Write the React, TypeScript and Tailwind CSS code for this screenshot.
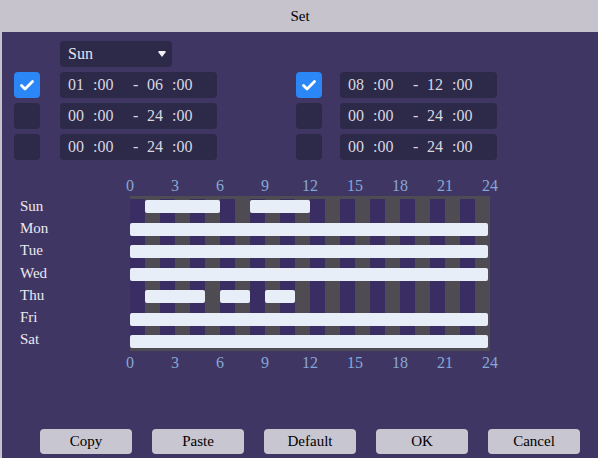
import React from 'react';

type Period = { on: boolean; from: string; to: string };

const leftPeriods: Period[] = [
  { on: true, from: '01', to: '06' },
  { on: false, from: '00', to: '24' },
  { on: false, from: '00', to: '24' },
];

const rightPeriods: Period[] = [
  { on: true, from: '08', to: '12' },
  { on: false, from: '00', to: '24' },
  { on: false, from: '00', to: '24' },
];

// hour ranges per day [start, end]
const schedule: { day: string; spans: [number, number][] }[] = [
  { day: 'Sun', spans: [[1, 6], [8, 12]] },
  { day: 'Mon', spans: [[0, 24]] },
  { day: 'Tue', spans: [[0, 24]] },
  { day: 'Wed', spans: [[0, 24]] },
  { day: 'Thu', spans: [[1, 5], [6, 8], [9, 11]] },
  { day: 'Fri', spans: [[0, 24]] },
  { day: 'Sat', spans: [[0, 24]] },
];

const ticks = [0, 3, 6, 9, 12, 15, 18, 21, 24];
const HOUR = 15;

const Checkbox: React.FC<{ on: boolean }> = ({ on }) => (
  <div
    className={`w-[26px] h-[26px] rounded-[4px] flex items-center justify-center ${
      on ? 'bg-[#2b87f6]' : 'bg-[#2d2948]'
    }`}
  >
    {on && (
      <svg width="18" height="18" viewBox="0 0 18 18">
        <polyline points="3.5,9.5 7,13 14.5,5.5" fill="none" stroke="white" strokeWidth="2.8" strokeLinecap="round" strokeLinejoin="round" />
      </svg>
    )}
  </div>
);

const TimeField: React.FC<{ from: string; to: string }> = ({ from, to }) => (
  <div className="w-[157px] h-[26px] rounded-[4px] bg-[#2d2948] flex items-center pl-[8px] text-[16px] text-[#d8d8e2]">
    <span className="w-[25px]">{from}</span>
    <span className="w-[40px]">:00</span>
    <span className="w-[14px]">-</span>
    <span className="w-[25px]">{to}</span>
    <span>:00</span>
  </div>
);

const Axis = () => (
  <div className="grid grid-cols-[repeat(9,45px)] ml-[93.5px] h-[20px] items-center text-[16px] leading-none text-[#84a8d8]">
    {ticks.map((t) => (
      <span key={t} className="text-center">{t}</span>
    ))}
  </div>
);

export default function App() {
  return (
    <div className="w-[598px] h-[458px] flex flex-col bg-[#403663] border-l-2 border-[#c6c3cc] overflow-hidden font-['Liberation_Serif','Times_New_Roman',serif]">
      <div className="h-[32px] shrink-0 bg-[#c6c3cc] flex items-center justify-center text-[15px] text-black">
        Set
      </div>

      <div className="flex-1 flex flex-col pl-[12px] pt-[9px] pb-[4px]">
        <div className="ml-[46px] w-[112px] h-[26px] rounded-[4px] bg-[#2d2948] flex items-center justify-between pl-[8px] pr-[6px] text-[16px] text-[#e4e4ec]">
          <span>Sun</span>
          <svg width="8" height="7" viewBox="0 0 8 7">
            <path d="M0.5 0 H7.5 V1.5 L4 6 L0.5 1.5 Z" fill="#f0f0f4" />
          </svg>
        </div>

        <div className="mt-[5px] flex flex-col gap-[5px]">
          {leftPeriods.map((p, i) => (
            <div key={i} className="flex items-center">
              <Checkbox on={p.on} />
              <div className="ml-[20px]">
                <TimeField from={p.from} to={p.to} />
              </div>
              <div className="ml-[79px]">
                <Checkbox on={rightPeriods[i].on} />
              </div>
              <div className="ml-[18px]">
                <TimeField from={rightPeriods[i].from} to={rightPeriods[i].to} />
              </div>
            </div>
          ))}
        </div>

        <div className="mt-[16px]">
          <Axis />
        </div>

        <div className="flex">
          <div className="ml-[6px] w-[110px] pt-[4px] flex flex-col gap-[9.2px] text-[15px] text-[#eceaf2]">
            {schedule.map((r) => (
              <div key={r.day} className="h-[13px] leading-[13px]">{r.day}</div>
            ))}
          </div>
          <div className="w-[360px] bg-[#4e4c52] py-[3px]">
            <div className="pt-[1px] flex flex-col gap-[9.5px] bg-[repeating-linear-gradient(90deg,#392d64_0px,#392d64_15px,#4e4c52_15px,#4e4c52_30px)]">
              {schedule.map((r) => (
                <div key={r.day} className="relative h-[13px]">
                  {r.spans.map(([a, b], j) => (
                    <div
                      key={j}
                      className="absolute top-0 h-[13px] rounded-[2px] bg-[#e7eef8]"
                      style={{ left: a * HOUR, width: (b - a) * HOUR - (b === 24 ? 2 : 0) }}
                    />
                  ))}
                </div>
              ))}
            </div>
          </div>
        </div>

        <div className="mt-[2px]">
          <Axis />
        </div>

        <div className="mt-auto ml-[26px] flex gap-[20px]">
          {['Copy', 'Paste', 'Default', 'OK', 'Cancel'].map((b) => (
            <button
              key={b}
              className="w-[92px] h-[25px] rounded-[4px] bg-[#c8c6d0] text-[15px] text-black flex items-center justify-center"
            >
              {b}
            </button>
          ))}
        </div>
      </div>
    </div>
  );
}
